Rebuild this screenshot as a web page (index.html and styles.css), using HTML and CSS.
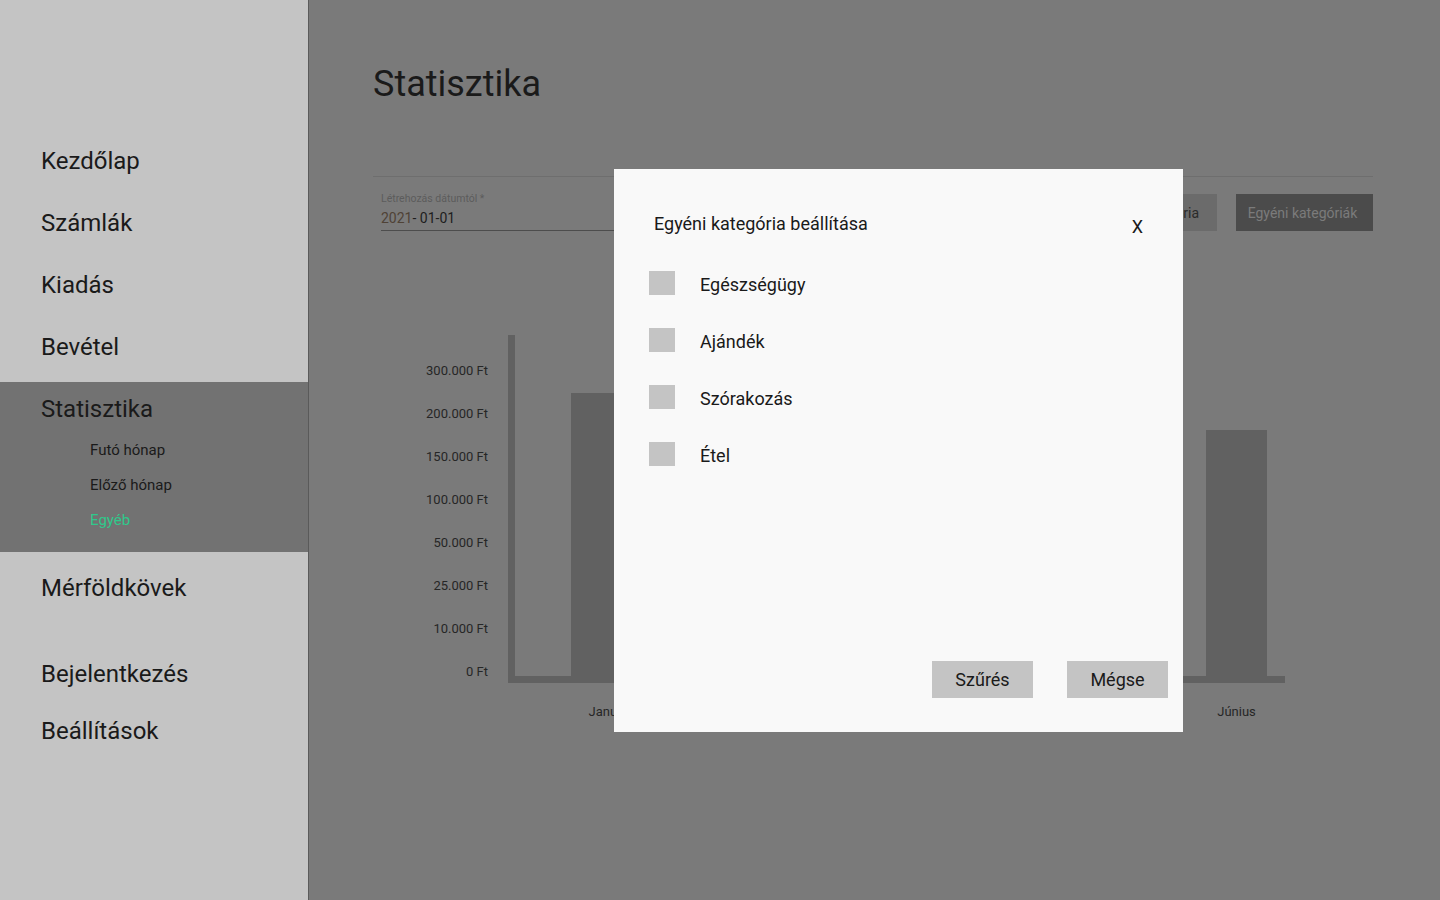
FILE: index.html
```html
<!DOCTYPE html>
<html lang="hu">
<head>
<meta charset="utf-8">
<title>Statisztika</title>
<link rel="stylesheet" href="styles.css">
</head>
<body>
<div class="app">
  <aside class="sidebar">
    <nav class="nav">
      <a class="nav-item">Kezdőlap</a>
      <a class="nav-item">Számlák</a>
      <a class="nav-item">Kiadás</a>
      <a class="nav-item">Bevétel</a>
      <div class="nav-group">
        <a class="nav-group-title">Statisztika</a>
        <div class="sub-list">
          <a class="sub-item">Futó hónap</a>
          <a class="sub-item">Előző hónap</a>
          <a class="sub-item sub-active">Egyéb</a>
        </div>
      </div>
      <a class="nav-item nav-after">Mérföldkövek</a>
      <a class="nav-item nav-low nav-gap">Bejelentkezés</a>
      <a class="nav-item nav-low">Beállítások</a>
    </nav>
  </aside>

  <main class="main">
    <h1 class="page-title">Statisztika</h1>

    <section class="filters">
      <div class="date-field">
        <div class="date-label">Létrehozás dátumtól *</div>
        <div class="date-value"><span class="year">2021</span>- 01-01</div>
      </div>
      <div class="filter-buttons">
        <button class="btn-cat">Kategória</button>
        <button class="btn-own">Egyéni kategóriák</button>
      </div>
    </section>

    <section class="chart">
      <div class="y-labels">
        <span>300.000 Ft</span>
        <span>200.000 Ft</span>
        <span>150.000 Ft</span>
        <span>100.000 Ft</span>
        <span>50.000 Ft</span>
        <span>25.000 Ft</span>
        <span>10.000 Ft</span>
        <span>0 Ft</span>
      </div>
      <div class="plot-wrap">
        <div class="plot">
          <div class="bar" style="height:283px"></div>
          <div class="bar" style="height:200px"></div>
          <div class="bar" style="height:150px"></div>
          <div class="bar" style="height:230px"></div>
          <div class="bar" style="height:180px"></div>
          <div class="bar" style="height:246px"></div>
        </div>
        <div class="x-labels">
          <span>Január</span>
          <span>Február</span>
          <span>Március</span>
          <span>Április</span>
          <span>Május</span>
          <span>Június</span>
        </div>
      </div>
    </section>
  </main>
</div>

<div class="modal">
  <div class="modal-head">
    <h2 class="modal-title">Egyéni kategória beállítása</h2>
    <span class="modal-close">X</span>
  </div>
  <ul class="check-list">
    <li class="check-row"><span class="check-box"></span><span>Egészségügy</span></li>
    <li class="check-row"><span class="check-box"></span><span>Ajándék</span></li>
    <li class="check-row"><span class="check-box"></span><span>Szórakozás</span></li>
    <li class="check-row"><span class="check-box"></span><span>Étel</span></li>
  </ul>
  <div class="modal-foot">
    <button class="modal-btn">Szűrés</button>
    <button class="modal-btn">Mégse</button>
  </div>
</div>
</body>
</html>
```

FILE: styles.css
```css
* { box-sizing: border-box; }

html, body {
  margin: 0;
  padding: 0;
  height: 100%;
}

body {
  font-family: Roboto, "Noto Sans", "Liberation Sans", sans-serif;
  color: #1a1a1a;
  background: #7a7a7a;
  overflow: hidden;
}

.app {
  display: flex;
  height: 900px;
}

/* Sidebar */
.sidebar {
  width: 309px;
  flex: 0 0 309px;
  background: #c4c4c4;
  border-right: 1px solid #5a5a5a;
}

.nav {
  display: flex;
  flex-direction: column;
  padding-top: 130px;
}

.nav-item {
  display: block;
  height: 62px;
  line-height: 62px;
  padding-left: 41px;
  font-size: 24px;
  color: #1a1a1a;
}

.nav-group {
  margin-top: 4px;
  background: #727272;
  padding: 10px 0 14px;
}

.nav-group-title {
  display: block;
  height: 34px;
  line-height: 34px;
  padding-left: 41px;
  font-size: 24px;
  color: #1a1a1a;
}

.sub-list {
  display: flex;
  flex-direction: column;
  margin-top: 7px;
}

.sub-item {
  display: block;
  height: 35px;
  line-height: 35px;
  padding-left: 90px;
  font-size: 15px;
  color: #1a1a1a;
}

.sub-active { color: #2fc98b; }

.nav-after { margin-top: 5px; }

.nav-low {
  height: 57px;
  line-height: 57px;
}

.nav-gap { margin-top: 27px; }

/* Main */
.main {
  flex: 1;
  padding: 63px 67px 0 64px;
  background: #7a7a7a;
}

.page-title {
  margin: 0;
  font-size: 36px;
  line-height: 42px;
  font-weight: 400;
  color: #1a1a1a;
}

.filters {
  margin-top: 71px;
  border-top: 1px solid #6e6e6e;
  padding: 15px 0 0 8px;
  display: flex;
  justify-content: space-between;
  align-items: flex-start;
}

.date-field {
  width: 330px;
  border-bottom: 1px solid #4d4d4d;
  padding-bottom: 3px;
}

.date-label {
  font-size: 10.5px;
  line-height: 13px;
  color: #5c5c5c;
}

.date-value {
  margin-top: 4px;
  font-size: 14px;
  line-height: 18px;
  color: #1e1e1e;
}

.year { color: #4f4236; }

.filter-buttons {
  display: flex;
  gap: 19px;
  margin-top: 2px;
}

.filter-buttons button {
  font-family: inherit;
  font-size: 14px;
  line-height: 18px;
  height: 37px;
  border: 0;
  padding: 1px 18px 0;
}

.btn-cat {
  background: #6b6b6b;
  color: #2a2a2a;
}

.btn-own {
  width: 137px;
  background: #4b4b4b;
  color: #7b7b7b;
  padding: 1px 4px 0 0 !important;
}

/* Chart */
.chart {
  margin-top: 104px;
  display: flex;
}

.y-labels {
  width: 115px;
  display: flex;
  flex-direction: column;
  align-items: flex-end;
  padding-top: 14px;
  margin-right: 20px;
}

.y-labels span {
  height: 43px;
  line-height: 43px;
  font-size: 13px;
  color: #262626;
}

.plot-wrap {
  width: 777px;
}

.plot {
  height: 348px;
  border-left: 7px solid #616161;
  border-bottom: 7px solid #616161;
  display: flex;
  align-items: flex-end;
  gap: 66px;
  padding-left: 56px;
}

.bar {
  width: 61px;
  background: #616161;
}

.x-labels {
  display: flex;
  gap: 66px;
  padding-left: 63px;
  margin-top: 21px;
}

.x-labels span {
  width: 61px;
  text-align: center;
  font-size: 13px;
  line-height: 16px;
  color: #262626;
  white-space: nowrap;
}

.x-labels span:first-child { padding-left: 14px; }

/* Modal */
.modal {
  position: absolute;
  left: 614px;
  top: 169px;
  width: 569px;
  height: 563px;
  background: #f9f9f9;
  display: flex;
  flex-direction: column;
}

.modal-head {
  display: flex;
  justify-content: space-between;
  align-items: flex-start;
  padding: 43px 40px 0 40px;
}

.modal-title {
  margin: 0;
  font-size: 18px;
  line-height: 24px;
  font-weight: 400;
  color: #1a1a1a;
}

.modal-close {
  font-size: 18px;
  line-height: 24px;
  margin-top: 3px;
  color: #1a1a1a;
}

.check-list {
  list-style: none;
  margin: 17px 0 0;
  padding: 0 0 0 35px;
  flex: 1;
}

.check-row {
  display: flex;
  align-items: center;
  height: 57px;
  font-size: 18px;
  color: #1a1a1a;
}

.check-box {
  width: 26px;
  height: 24px;
  background: #c4c4c4;
  margin-right: 25px;
  margin-top: -4px;
}

.modal-foot {
  display: flex;
  justify-content: flex-end;
  gap: 34px;
  padding: 0 15px 34px 0;
}

.modal-btn {
  width: 101px;
  height: 37px;
  border: 0;
  background: #c4c4c4;
  font-family: inherit;
  font-size: 18px;
  color: #1a1a1a;
  padding: 0;
}
```
